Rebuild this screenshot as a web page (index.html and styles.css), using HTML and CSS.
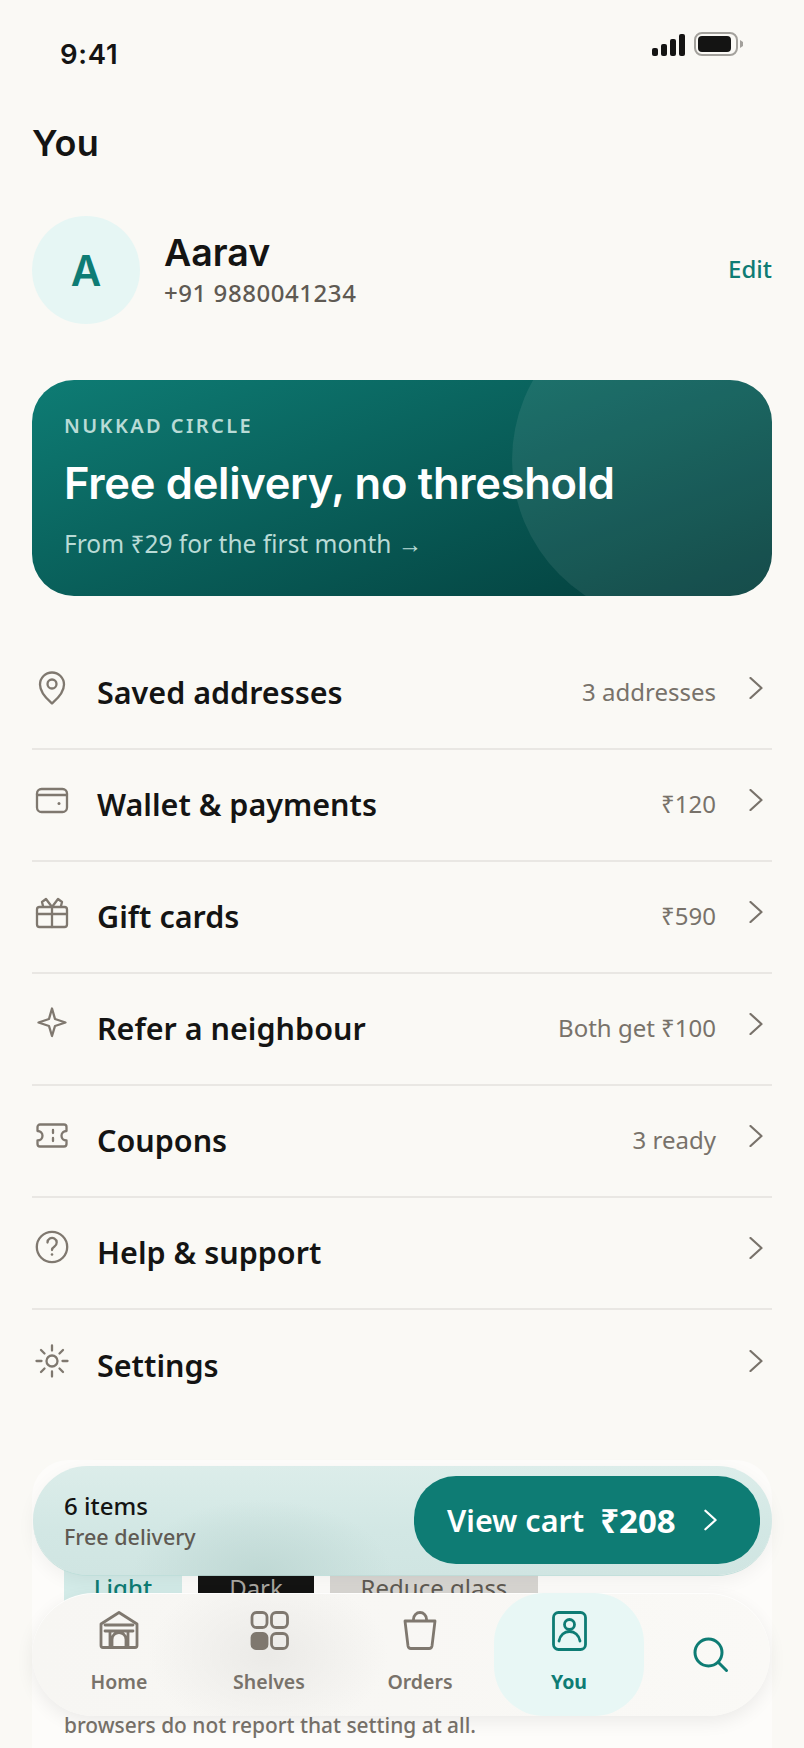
FILE: index.html
```html
<!DOCTYPE html>
<html lang="en">
<head>
<meta charset="utf-8">
<title>You</title>
<link rel="stylesheet" href="styles.css">
</head>
<body>
<div class="screen">
  <div class="status">
    <span class="time">9:41</span>
    <div class="status-icons">
      <svg class="signal" width="34" height="22" viewBox="0 0 34 22"><rect x="0" y="14" width="6" height="8" rx="2"/><rect x="9" y="10" width="6" height="12" rx="2"/><rect x="18" y="5" width="6" height="17" rx="2"/><rect x="27" y="0" width="6" height="22" rx="2"/></svg>
      <svg class="battery" width="50" height="24" viewBox="0 0 50 24"><rect x="1" y="1" width="42" height="22" rx="7" fill="none" stroke="#a3a19c" stroke-width="2"/><rect x="4" y="4" width="33" height="16" rx="4" fill="#141413"/><path d="M46 8l3 2v4l-3 2z" fill="#a3a19c"/></svg>
    </div>
  </div>
  <main class="content">
    <h1 class="title">You</h1>
    <section class="profile">
      <div class="avatar">A</div>
      <div class="who">
        <div class="name">Aarav</div>
        <div class="phone">+91 9880041234</div>
      </div>
      <a class="edit">Edit</a>
    </section>
    <section class="promo">
      <div class="promo-circle"></div>
      <div class="promo-eyebrow">NUKKAD CIRCLE</div>
      <div class="promo-title">Free delivery, no threshold</div>
      <div class="promo-sub">From ₹29 for the first month →</div>
    </section>
    <section class="list">
      <div class="row">
        <svg class="ico" viewBox="0 0 40 40"><path d="M20 36.500C18 34.500 8 27 8 17.500a12 12 0 0 1 24 0C32 27 22 34.500 20 36.500z"/><circle cx="20" cy="17" r="4.500"/></svg>
        <span class="label">Saved addresses</span><span class="meta">3 addresses</span>
        <svg class="chev" viewBox="0 0 14 22"><path d="M1.500 1l11 10-11 10"/></svg>
      </div>
      <div class="row">
        <svg class="ico" viewBox="0 0 40 40"><rect x="5" y="10" width="30" height="23" rx="4.500"/><path d="M5 16h30"/><circle class="dot" cx="27" cy="24.500" r="1.500"/></svg>
        <span class="label">Wallet &amp; payments</span><span class="meta">₹120</span>
        <svg class="chev" viewBox="0 0 14 22"><path d="M1.500 1l11 10-11 10"/></svg>
      </div>
      <div class="row">
        <svg class="ico" viewBox="0 0 40 40"><rect x="5" y="16" width="30" height="20" rx="2.500"/><path d="M5 23h30M20 16v20M20 16l-6-8-4 3 1 4M20 16l6-8 4 3-1 4"/></svg>
        <span class="label">Gift cards</span><span class="meta">₹590</span>
        <svg class="chev" viewBox="0 0 14 22"><path d="M1.500 1l11 10-11 10"/></svg>
      </div>
      <div class="row">
        <svg class="ico" viewBox="0 0 40 40"><path d="M20 5.500l3 10.500 10.500 3.500-10.500 3.500-3 10-3-10-10.500-3.500 10.500-3.500z"/></svg>
        <span class="label">Refer a neighbour</span><span class="meta">Both get ₹100</span>
        <svg class="chev" viewBox="0 0 14 22"><path d="M1.500 1l11 10-11 10"/></svg>
      </div>
      <div class="row">
        <svg class="ico" viewBox="0 0 40 40"><path d="M8 9.500H32a2.500 2.500 0 0 1 2.500 2.500v4c-3 0-5 2-5 4.750s2 4.750 5 4.750V29a2.500 2.500 0 0 1-2.500 2.500H8A2.500 2.500 0 0 1 5.500 29v-3.500c3 0 5-2 5-4.750s-2-4.750-5-4.750V12A2.500 2.500 0 0 1 8 9.500z"/><path d="M21 15v3M21 23v3"/></svg>
        <span class="label">Coupons</span><span class="meta">3 ready</span>
        <svg class="chev" viewBox="0 0 14 22"><path d="M1.500 1l11 10-11 10"/></svg>
      </div>
      <div class="row">
        <svg class="ico" viewBox="0 0 40 40"><circle cx="20" cy="20" r="15.200"/><path d="M15.500 15.500a4.600 4.600 0 1 1 7 3.900c-1.600 1-2.500 1.800-2.500 3.600"/><circle class="dot" cx="20" cy="27.500" r="1.300"/></svg>
        <span class="label">Help &amp; support</span><span class="meta"></span>
        <svg class="chev" viewBox="0 0 14 22"><path d="M1.500 1l11 10-11 10"/></svg>
      </div>
      <div class="row">
        <svg class="ico" viewBox="0 0 40 40"><circle cx="20" cy="21" r="5.500"/><path d="M20 5.500v5M20 31.500v5M4.500 21h5M30.500 21h5M9 10l3.500 3.500M27.500 28.500L31 32M9 32l3.500-3.500M27.500 13.500L31 10"/></svg>
        <span class="label">Settings</span><span class="meta"></span>
        <svg class="chev" viewBox="0 0 14 22"><path d="M1.500 1l11 10-11 10"/></svg>
      </div>
    </section>
    <section class="settings">
      <div class="chips">
        <span class="chip chip-light">Light</span>
        <span class="chip chip-dark">Dark</span>
        <span class="chip chip-glass">Reduce glass</span>
      </div>
      <p class="note">browsers do not report that setting at all.</p>
    </section>
  </main>

  <div class="cartbar">
    <div class="cart-info">
      <div class="cart-items">6 items</div>
      <div class="cart-free">Free delivery</div>
    </div>
    <div class="cart-btn">
      <span class="cart-view">View cart</span>
      <span class="cart-price">₹208</span>
      <svg class="cart-chev" viewBox="0 0 14 22"><path d="M1.500 1l11 10-11 10"/></svg>
    </div>
  </div>

  <nav class="tabbar">
    <div class="tab tab-home">
      <svg class="tab-ico" viewBox="0 0 44 40"><path d="M22 1.500L4 13v21.500a2 2 0 0 0 2 2h32a2 2 0 0 0 2-2V13z"/><path d="M8 14h28M8 20h28M13 36.500V20M31 36.500V20M15 36.500v-8a7 7 0 0 1 14 0v8"/></svg>
      <span class="tab-label">Home</span>
    </div>
    <div class="tab tab-shelves">
      <svg class="tab-ico" viewBox="0 0 44 40"><rect x="5" y="1.500" width="15" height="15" rx="4.500"/><rect x="24.500" y="1.500" width="16" height="15" rx="4.500"/><rect class="fill" x="5" y="22.500" width="15" height="15" rx="4"/><rect x="24.500" y="22.500" width="16" height="15" rx="4.500"/></svg>
      <span class="tab-label">Shelves</span>
    </div>
    <div class="tab tab-orders">
      <svg class="tab-ico" viewBox="0 0 44 40"><path d="M7 10h30l-3 25a3 3 0 0 1-3 2.500H13a3 3 0 0 1-3-2.500zM15.500 10V8a6.500 6.500 0 0 1 13 0v2"/></svg>
      <span class="tab-label">Orders</span>
    </div>
    <div class="tab tab-you">
      <svg class="tab-ico" viewBox="0 0 44 40"><rect x="6.500" y="1.500" width="32" height="37" rx="5"/><circle cx="22.500" cy="13.500" r="5"/><path d="M12 30c1-6 5.500-9.500 10.500-9.500S32 24 33 30"/></svg>
      <span class="tab-label">You</span>
    </div>
    <svg class="search" viewBox="0 0 36 36"><circle cx="15.500" cy="15.500" r="13.500"/><path d="M25.500 25.500l8 8"/></svg>
  </nav>
</div>
</body>
</html>
```
FILE: styles.css
```css
* { box-sizing: border-box; }
html, body { margin: 0; padding: 0; }
body { background: #faf9f5; font-family: "Noto Sans", "Liberation Sans", sans-serif; color: #141413; }
.screen { position: relative; width: 804px; height: 1748px; overflow: hidden; background: #faf9f5; }

.status { display: flex; justify-content: space-between; height: 90px; padding: 32px 60px 0 60px; }
.time { font-family: Inter, sans-serif; font-weight: 600; font-size: 27.500px; letter-spacing: .7px; line-height: 44px; }
.status-icons { display: flex; gap: 8px; align-items: flex-start; }
.signal { fill: #141413; margin-top: 2px; }

.content { padding: 0 32px; }
.title { margin: 0; height: 126px; padding-top: 30px; font-family: Inter, sans-serif; font-weight: 600; font-size: 36px; letter-spacing: .3px; line-height: 46px; }

.profile { display: flex; align-items: center; height: 108px; }
.avatar { width: 108px; height: 108px; border-radius: 50%; background: #e6f6f4; color: #0e7c74; display: flex; align-items: center; justify-content: center; font-family: Inter, sans-serif; font-weight: 600; font-size: 42px; }
.who { flex: 1; margin-left: 24px; }
.name { font-family: Inter, sans-serif; font-weight: 600; font-size: 37.500px; line-height: 46px; }
.phone { font-size: 24px; letter-spacing: .55px; line-height: 34px; color: #5f5a53; font-weight: 500; }
.edit { color: #0e7c74; font-size: 24px; font-weight: 500; margin-bottom: 4px; }

.promo { position: relative; overflow: hidden; margin-top: 56px; height: 216px; border-radius: 42px; padding: 32px 32px 0; background: linear-gradient(160deg, #0e7c74 0%, #033d3b 100%); color: #fff; }
.promo-circle { position: absolute; left: 480px; top: -82px; width: 324px; height: 324px; border-radius: 50%; background: rgba(255,255,255,.08); }
.promo-eyebrow { position: relative; font-size: 20px; line-height: 28px; font-weight: 600; letter-spacing: 2.400px; color: #b9dbd6; }
.promo-title { position: relative; margin-top: 14px; font-family: Inter, sans-serif; font-weight: 600; font-size: 43.500px; line-height: 58px; letter-spacing: -.3px; white-space: nowrap; }
.promo-sub { position: relative; margin-top: 14px; font-size: 24.500px; line-height: 36px; color: #b9dbd6; }

.list { margin-top: 42px; }
.row { display: flex; align-items: center; height: 112px; border-bottom: 2px solid #e9e7e3; }
.row:last-child { border-bottom: 0; }
.ico { width: 40px; height: 40px; flex: none; margin-bottom: 13px; fill: none; stroke: #7f786f; stroke-width: 2.300; stroke-linecap: round; stroke-linejoin: round; }
.ico .dot { fill: #7f786f; stroke: none; }
.label { margin-left: 25px; margin-bottom: 2px; flex: 1; font-weight: 600; font-size: 30.500px; }
.meta { font-size: 24px; color: #78726a; margin-bottom: 4px; }
.chev { width: 14px; height: 22px; flex: none; margin-left: 33px; margin-right: 9px; margin-bottom: 10px; fill: none; stroke: #78726a; stroke-width: 2.200; stroke-linecap: round; stroke-linejoin: round; }

.settings { margin-top: 38px; height: 340px; border-radius: 36px; background: rgba(255,255,255,.5); padding: 95px 32px 0; }
.chips { display: flex; gap: 16px; }
.chip { width: 118px; height: 64px; border-radius: 16px; display: flex; align-items: center; justify-content: center; font-size: 24px; }
.chip-light { background: #d3ebe8; color: #0e7c74; font-weight: 500; }
.chip-dark { background: #141413; color: #a9a7a2; width: 116px; }
.chip-glass { background: #d8d6d2; color: #5f5a53; width: 208px; border-radius: 0; }
.note { margin: 89px 0 0; font-size: 20.900px; line-height: 34px; color: #78726a; font-weight: 500; }

.cartbar { position: absolute; left: 33px; top: 1466px; width: 739px; height: 109px; border-radius: 55px; display: flex; justify-content: space-between; align-items: center; padding: 0 12px 0 31px; background: radial-gradient(ellipse 130px 75px at 31% 100%, #bfd8d4 0%, rgba(191,216,212,0) 100%), linear-gradient(180deg, #dcedea 0%, #d2e7e4 60%, #d0e5e2 100%); box-shadow: 0 1px 0 rgba(190,222,217,.9), 0 6px 18px rgba(0,0,0,.05); }
.cart-items { font-size: 24px; line-height: 32px; font-weight: 500; color: #141413; }
.cart-free { font-size: 21.500px; line-height: 29px; color: #5f5a53; font-weight: 500; }
.cart-btn { display: flex; align-items: center; width: 346px; height: 88px; margin-top: -1px; border-radius: 42px; background: #0e7c74; color: #fff; padding-left: 33px; }
.cart-view { font-size: 30.500px; font-weight: 600; }
.cart-price { font-size: 33px; font-weight: 700; margin-left: 16px; }
.cart-chev { width: 13px; height: 22px; margin-left: 28px; fill: none; stroke: #fff; stroke-width: 2.400; stroke-linecap: round; stroke-linejoin: round; }

.tabbar { position: absolute; left: 32px; top: 1593px; width: 738px; height: 123px; border-radius: 62px; background: radial-gradient(ellipse 120px 80px at 32% 50%, #ebeae7 0%, rgba(235,234,231,0) 100%), linear-gradient(90deg, #f7f6f3 0%, #f8f7f4 50%, #faf9f6 100%); box-shadow: inset 0 1px 0 rgba(255,255,255,.8), 0 6px 18px rgba(0,0,0,.07); display: flex; }
.tab { position: absolute; top: 0; height: 123px; width: 150px; display: flex; flex-direction: column; align-items: center; padding-top: 18px; }
.tab-home { left: 12px; }
.tab-shelves { left: 162px; }
.tab-orders { left: 313px; }
.tab-you { left: 462px; background: #e8f7f5; border-radius: 50px; }
.tab-ico { width: 44px; height: 40px; fill: none; stroke: #7f786f; stroke-width: 2.800; stroke-linecap: round; stroke-linejoin: round; }
.tab-ico .fill { fill: #7f786f; }
.tab-label { margin-top: 17px; font-size: 19.500px; line-height: 28px; font-weight: 600; color: #78726a; }
.tab-you .tab-ico { stroke: #0e7c74; }
.tab-you .tab-label { color: #0e7c74; font-weight: 700; }
.search { position: absolute; left: 661px; top: 44px; width: 36px; height: 36px; fill: none; stroke: #0e7c74; stroke-width: 3; stroke-linecap: round; }
```
